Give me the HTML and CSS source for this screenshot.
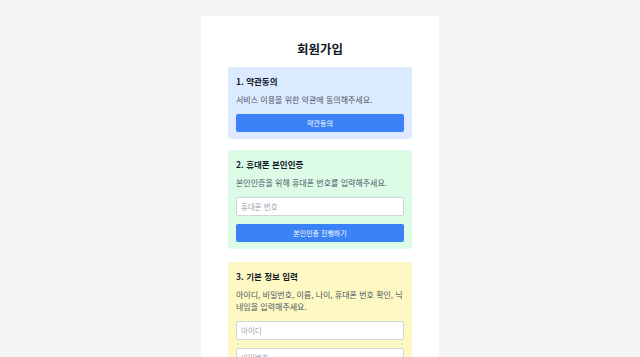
FILE: index.html
```html
<!DOCTYPE html>
<html lang="ko">
<head>
<meta charset="utf-8">
<link rel="stylesheet" href="styles.css">
</head>
<body>
<main class="card">
  <h1 class="title">회원가입</h1>
  <section class="step step-blue">
    <h2 class="step-title">1. 약관동의</h2>
    <p class="step-desc">서비스 이용을 위한 약관에 동의해주세요.</p>
    <button class="btn">약관동의</button>
  </section>
  <section class="step step-green">
    <h2 class="step-title">2. 휴대폰 본인인증</h2>
    <p class="step-desc">본인인증을 위해 휴대폰 번호를 입력해주세요.</p>
    <input class="field" type="text" placeholder="휴대폰 번호">
    <button class="btn">본인인증 진행하기</button>
  </section>
  <section class="step step-yellow step-last">
    <h2 class="step-title">3. 기본 정보 입력</h2>
    <p class="step-desc">아이디, 비밀번호, 이름, 나이, 휴대폰 번호 확인, 닉네임을 입력해주세요.</p>
    <input class="field" type="text" placeholder="아이디">
    <input class="field" type="password" placeholder="비밀번호">
    <input class="field" type="text" placeholder="이름">
  </section>
</main>
</body>
</html>
```

FILE: styles.css
```css
html, body {
  margin: 0;
  padding: 0;
}
body {
  background: #f3f4f6;
  font-family: "Noto Sans CJK KR", "Noto Sans", sans-serif;
  color: #111827;
  padding-top: 16px;
}
.card {
  width: 238px;
  margin: 0 auto;
  background: #ffffff;
  padding: 26px 27px;
  box-sizing: border-box;
  display: flex;
  flex-direction: column;
  gap: 11px;
}
.title {
  margin: 0;
  font-size: 12.5px;
  line-height: 14px;
  font-weight: 700;
  text-align: center;
}
.step {
  border-radius: 3px;
  padding: 8px 8px 7px;
  display: flex;
  flex-direction: column;
  gap: 8px;
}
.step-last {
  margin-top: 2px;
}
.step-blue { background: #dbeafe; }
.step-green { background: #dcfce7; }
.step-yellow { background: #fef9c3; }
.step-title {
  margin: 0 0 -1px;
  font-size: 8.5px;
  line-height: 12px;
  font-weight: 700;
}
.step-desc {
  margin: 0;
  font-size: 8px;
  line-height: 12px;
  color: #4b5563;
}
.btn {
  height: 18px;
  border: 0;
  border-radius: 2px;
  background: #3b82f6;
  color: #ffffff;
  font-family: inherit;
  font-size: 7px;
  padding: 0;
}
.field {
  height: 19px;
  box-sizing: border-box;
  border: 1px solid #d1d5db;
  border-radius: 2px;
  background: #ffffff;
  font-family: inherit;
  font-size: 7.5px;
  padding: 0 4px;
  margin: 0;
}
.field::placeholder {
  color: #9ca3af;
}
```
